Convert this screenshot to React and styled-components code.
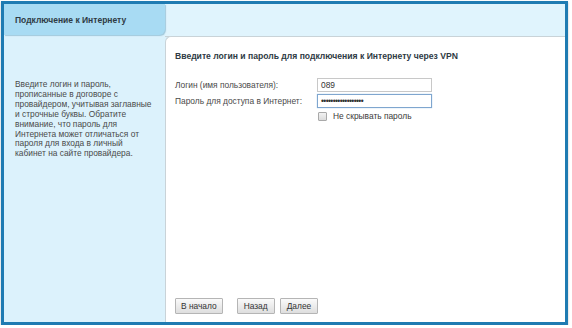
import React from "react";
import styled, { createGlobalStyle } from "styled-components";

const Global = createGlobalStyle`
  html, body { margin: 0; padding: 0; background: #ffffff; }
  body { font-family: "Liberation Sans", Arial, sans-serif; }
`;

const Frame = styled.div`
  margin: 1px 0 0 1px;
  width: 567px;
  height: 324px;
  box-sizing: border-box;
  border: 3px solid #1f7bb2;
  background: #dcf2fc;
  display: grid;
  grid-template-columns: 161px 1fr;
  grid-template-rows: 33px 1fr;
  box-shadow: 0 1px 2px rgba(0,0,0,0.25);
`;

const Tab = styled.div`
  background: #a8dbf3;
  border-bottom-right-radius: 6px;
  box-shadow: 1px 1px 1px rgba(90, 150, 180, 0.45);
  height: 31px;
  display: flex;
  align-items: center;
  padding-left: 11px;
  font-size: 8.5px;
  font-weight: bold;
  color: #2e3a44;
  z-index: 1;
`;

const Strip = styled.div`
  background: #e0f4fd;
  border-bottom: 1px solid #c9d3d8;
`;

const Sidebar = styled.div`
  padding: 43px 6px 0 11px;
  font-size: 8.4px;
  line-height: 9.9px;
  color: #4a4a4a;
`;

const Panel = styled.div`
  background: #ffffff;
  border-left: 1px solid #c9d3d8;
  border-top-left-radius: 6px;
  margin-top: -1px;
  border-top: 1px solid #c9d3d8;
  padding: 14px 10px 8px 9px;
  display: flex;
  flex-direction: column;
`;

const Heading = styled.div`
  font-size: 8.6px;
  font-weight: bold;
  color: #2e3a44;
  margin-bottom: 17px;
`;

const FormGrid = styled.div`
  display: grid;
  grid-template-columns: 142px 115px;
  row-gap: 2px;
  align-items: center;
`;

const Label = styled.div`
  font-size: 8.4px;
  color: #4a4a4a;
`;

const Input = styled.div`
  box-sizing: border-box;
  height: 14px;
  border: 1px solid ${(p) => (p.$focus ? "#7fa6cf" : "#c8c8c8")};
  box-shadow: ${(p) => (p.$focus ? "0 0 1px #9cc0e6" : "none")};
  display: flex;
  align-items: center;
  padding-left: 3px;
  font-size: 8.4px;
  color: #333;
  letter-spacing: ${(p) => (p.$dots ? "-0.6px" : "0")};
  background: #fff;
`;

const CheckRow = styled.label`
  grid-column: 2;
  display: flex;
  align-items: center;
  gap: 6px;
  margin-top: 1px;
  font-size: 8.4px;
  color: #3a3a3a;
  padding-left: 1px;
`;

const Box = styled.span`
  width: 7px;
  height: 7px;
  border: 1px solid #a9a9a9;
  border-radius: 1px;
  background: linear-gradient(#f2f2f2, #dcdcdc);
`;

const Spacer = styled.div`
  flex: 1;
`;

const Buttons = styled.div`
  display: flex;
  gap: 5px;
`;

const Button = styled.button`
  font-family: "Liberation Sans", Arial, sans-serif;
  font-size: 8.4px;
  color: #333;
  height: 16px;
  padding: 0 ${(p) => p.$pad || 6}px;
  border: 1px solid #b5b5b5;
  border-radius: 1px;
  background: linear-gradient(#fafafa, #dedede);
  margin-right: ${(p) => p.$mr || 0}px;
`;

export default function App() {
  return (
    <>
      <Global />
      <Frame>
        <Tab>Подключение к Интернету</Tab>
        <Strip />
        <Sidebar>
          Введите логин и пароль,<br />
          прописанные в договоре с<br />
          провайдером, учитывая заглавные<br />
          и строчные буквы. Обратите<br />
          внимание, что пароль для<br />
          Интернета может отличаться от<br />
          пароля для входа в личный<br />
          кабинет на сайте провайдера.
        </Sidebar>
        <Panel>
          <Heading>Введите логин и пароль для подключения к Интернету через VPN</Heading>
          <FormGrid>
            <Label>Логин (имя пользователя):</Label>
            <Input>089</Input>
            <Label>Пароль для доступа в Интернет:</Label>
            <Input $focus $dots>••••••••••••••••••</Input>
            <CheckRow>
              <Box />
              Не скрывать пароль
            </CheckRow>
          </FormGrid>
          <Spacer />
          <Buttons>
            <Button $mr={9} $pad={5}>В начало</Button>
            <Button>Назад</Button>
            <Button>Далее</Button>
          </Buttons>
        </Panel>
      </Frame>
    </>
  );
}
